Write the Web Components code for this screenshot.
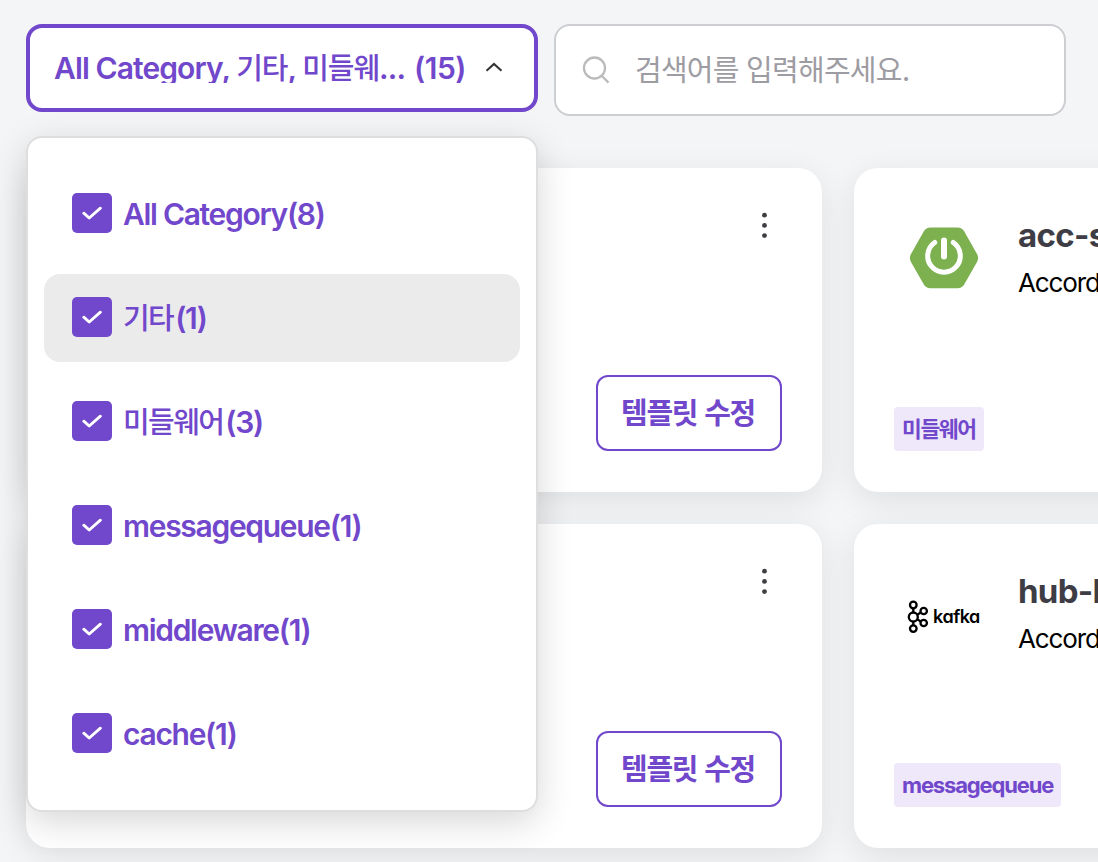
<!DOCTYPE html>
<html lang="ko">
<head>
<meta charset="utf-8">
<title>Template catalog</title>
<style>
html,body{margin:0;height:862px;overflow:hidden;background:#f4f5f7}
body{font-family:Inter,"Noto Sans CJK KR",sans-serif}
</style>
</head>
<body>
<catalog-page>
  <category-select slot="filters">
    <mixed-text slot="value">All Category, 기타, 미들웨...</mixed-text>
    <mixed-text slot="count">(15)</mixed-text>
    <category-option>All Category(8)</category-option>
    <category-option active>기타(1)</category-option>
    <category-option>미들웨어(3)</category-option>
    <category-option>messagequeue(1)</category-option>
    <category-option>middleware(1)</category-option>
    <category-option>cache(1)</category-option>
  </category-select>
  <search-field slot="filters">검색어를 입력해주세요.</search-field>
  <template-card menu></template-card>
  <template-card logo="spring" heading="acc-s" desc="Accord" tag="미들웨어"></template-card>
  <template-card menu></template-card>
  <template-card logo="kafka" heading="hub-k" desc="Accord" tag="messagequeue"></template-card>
</catalog-page>
<script>
const define = (name, html) => customElements.define(name, class extends HTMLElement {
  connectedCallback() {
    if (this.shadowRoot) return;
    const root = this.attachShadow({mode: 'open'});
    root.innerHTML = typeof html === 'function' ? html(this) : html;
  }
});

// Splits text into Hangul and Latin runs so each script gets its own size, weight and tracking.
const runs = t => t.replace(/[\uac00-\ud7a3]+( [\uac00-\ud7a3]+)*/g, m => `<span class="ko">${m}</span>`);

define('mixed-text', el => `<style>
:host{display:inline-block;white-space:pre;font-size:var(--latin,30px);letter-spacing:var(--latin-track,-1.300px)}
.ko{font-family:"Noto Sans CJK KR",sans-serif;font-size:var(--hangul,29px);font-weight:var(--hangul-weight,inherit);letter-spacing:var(--hangul-track,-1.600px);margin-right:var(--hangul-end,0);line-height:0}
</style>${runs(el.textContent.trim())}`);

define('check-box', `<style>
:host{display:block;width:40px;height:40px;border-radius:5px;background:#7147cb}
svg{display:block}
</style><svg width="40" height="40" viewBox="0 0 40 40"><path d="M11.800 20.200 17.200 25 28.400 15.200" fill="none" stroke="#fff" stroke-width="2.900" stroke-linecap="round" stroke-linejoin="round"/></svg>`);

define('category-option', el => `<style>
:host{display:flex;align-items:center;gap:11px;height:88px;padding:0 28px;box-sizing:border-box;border-radius:16px;color:#7147cb;font-weight:600;--hangul-weight:500;--hangul-end:2px}
:host([active]){background:#ebebeb}
check-box{margin-bottom:2px}
mixed-text{line-height:40px}
</style><check-box></check-box><mixed-text>${el.textContent}</mixed-text>`);

define('category-select', `<style>
:host{display:block;position:relative;width:512px;z-index:2}
.trigger{box-sizing:border-box;height:88px;border:4px solid #7147cb;border-radius:16px;background:#fff;display:flex;align-items:center;padding:0 31px 0 24px;color:#7147cb;font-weight:600;--hangul-weight:500;--latin-track:-.900px;--hangul-track:-1.050px}
.value,.count{height:30px;line-height:31px;overflow:hidden}
.value{width:360px}
.count{--latin-track:-.500px}
svg{margin-left:auto;display:block}
.panel{position:absolute;left:0;top:112px;width:512px;height:676px;box-sizing:border-box;border:2px solid #dedede;border-radius:16px;background:#fff;padding:32px 16px;display:flex;flex-direction:column;gap:16px;box-shadow:0 10px 36px rgba(0,0,0,.16)}
</style>
<div class="trigger"><div class="value"><slot name="value"></slot></div><div class="count"><slot name="count"></slot></div>
<svg width="18" height="12" viewBox="0 0 18 12"><path d="M1.500 8.700 9 1.900l7.500 6.800" fill="none" stroke="#333" stroke-width="2"/></svg></div>
<div class="panel"><slot></slot></div>`);

define('search-field', el => `<style>
:host{display:flex;align-items:center;box-sizing:border-box;width:512px;height:92px;border:2px solid #cdced1;border-radius:16px;background:#fff;padding-left:26px;gap:23px;color:#9d9ca2;font-weight:400}
mixed-text{line-height:40px;--hangul-track:-.750px}
svg{display:block}
</style><svg width="30" height="30" viewBox="0 0 30 30"><g fill="none" stroke="#bbb" stroke-width="2.300"><circle cx="12.500" cy="13" r="10.500"/><path d="m19.700 20.800 6.800 6.800"/></g></svg><mixed-text>${el.textContent}</mixed-text>`);

define('spring-logo', `<style>:host{display:block}svg{display:block}</style>
<svg width="100" height="100" viewBox="0 0 100 100">
<path d="M36.500 19.600h27q4.500 0 6.800 4L83 46q2.200 4 0 8L70.300 76.300q-2.300 4-6.800 4h-27q-4.500 0-6.800-4L17 54q-2.200-4 0-8l12.700-22.400q2.300-4 6.800-4Z" fill="#7db04f"/>
<g fill="none" stroke="#fff" stroke-linecap="round"><path d="M50 32.500v16" stroke-width="6"/><path d="M40.700 34.500a16.300 16.300 0 1 0 18.600 0" stroke-width="5"/></g></svg>`);

define('kafka-logo', `<style>:host{display:flex;align-items:center;width:100px;height:100px;padding:0 0 0 12px;box-sizing:border-box}
svg{display:block;flex:none}
span{font:600 18px/20px Inter,sans-serif;font-feature-settings:"cv11" 1;color:#000;letter-spacing:-.450px;margin:0 0 0 3px}
</style><svg width="24" height="34" viewBox="0 0 24 34"><g fill="none" stroke="#000" stroke-width="2.300"><circle cx="7.300" cy="5" r="3.300"/><circle cx="7.300" cy="17" r="4.500"/><circle cx="7.300" cy="28.600" r="3.300"/><circle cx="17.700" cy="11" r="3.200"/><circle cx="17.700" cy="23" r="3.200"/><path d="M7.300 8.400v4.100M7.300 21.500v3.700M11.200 14.800l3.600-2.200M11.200 19.200l3.600 2.200"/></g></svg><span>kafka</span>`);

define('more-menu', `<style>:host{display:block}svg{display:block}</style><svg width="8" height="28" viewBox="0 0 8 28" fill="#3e3e42"><circle cx="3.500" cy="4.200" r="2.400"/><circle cx="3.500" cy="14.400" r="2.400"/><circle cx="3.500" cy="24.600" r="2.400"/></svg>`);

define('outline-button', `<style>
:host{display:flex;align-items:center;justify-content:center;box-sizing:border-box;width:186px;height:76px;border:2px solid #7147cb;border-radius:12px;color:#7147cb;font-weight:700}
mixed-text{line-height:40px;--hangul-track:-1.250px;margin-right:2px}
</style><mixed-text>템플릿 수정</mixed-text>`);

define('tag-chip', el => `<style>
:host{display:flex;align-items:center;box-sizing:border-box;height:44px;padding:0 8px;border-radius:4px;background:#efe8fa;color:#7147cb;font-weight:650}
mixed-text{line-height:30px;--latin:22px;--latin-track:-1.160px;--hangul:21.500px;--hangul-track:-1.350px}
</style><mixed-text>${el.textContent}</mixed-text>`);

define('template-card', el => {
  const g = n => el.getAttribute(n);
  const top = el.hasAttribute('menu')
    ? '<more-menu></more-menu>'
    : `<${g('logo')}-logo></${g('logo')}-logo><div class="info"><div class="heading">${g('heading')}</div><div class="desc">${g('desc')}</div></div>`;
  const foot = el.hasAttribute('menu') ? '<outline-button></outline-button>' : `<tag-chip>${g('tag')}</tag-chip>`;
  return `<style>
:host{display:flex;flex-direction:column;justify-content:space-between;box-sizing:border-box;height:324px;padding:40px 40px 41px;border-radius:24px;background:#fff;box-shadow:0 8px 32px rgba(0,0,0,.09)}
.top,.foot{display:flex;align-items:flex-start}
:host([menu]) .top,:host([menu]) .foot{justify-content:flex-end}
more-menu{margin:3px 13px 0 0}
.info{margin:7px 0 0 24px;white-space:nowrap}
.heading{font-weight:700;font-size:33px;line-height:40px;letter-spacing:-.700px;color:#3e3d45}
.desc{font-size:26px;line-height:36px;letter-spacing:-1.100px;color:#000;margin-top:10px}
kafka-logo{margin-top:3px}
</style><div class="top">${top}</div><div class="foot">${foot}</div>`;
});

define('catalog-page', `<style>
:host{display:block;box-sizing:border-box;width:1098px;height:862px;overflow:hidden;padding:24px 26px}
.filters{display:flex;gap:16px;align-items:flex-start;height:92px;position:relative;z-index:2}
.grid{display:grid;grid-template-columns:796px 796px;gap:32px;margin-top:52px}
</style><div class="filters"><slot name="filters"></slot></div><div class="grid"><slot></slot></div>`);
</script>
</body>
</html>
